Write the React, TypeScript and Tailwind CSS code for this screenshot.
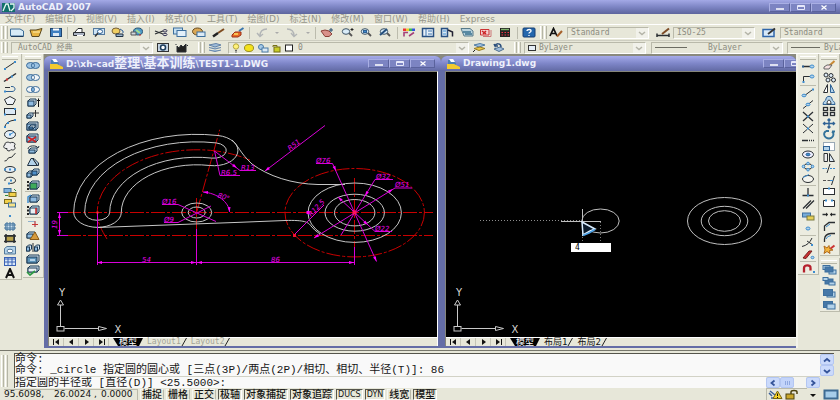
import type { ReactNode } from "react"
import clsx from "clsx"

type Tool = [label: string, icon: ReactNode] | "sep"

const K = "#2b2f33"
const B = "#2f6295"
const L = "#b4d3ea"
const S = "#3c8ccf"

function Dot({ x, y, c = S }: { x: number; y: number; c?: string }) {
  return <rect x={x - 1} y={y - 1} width="2" height="2" fill={c} stroke="none" />
}

function Cube({ x = 3, y = 2, w = 9, h = 7, fill = "#8fbbe0" }: { x?: number; y?: number; w?: number; h?: number; fill?: string }) {
  return (
    <g stroke="#1d3a55">
      <path d={`M${x} ${y + 2}l2 -2h${w - 2}v${h - 2}l-2 2h-${w - 2}z`} fill="#d5e6f3" />
      <rect x={x} y={y + 2} width={w - 2} height={h - 2} fill={fill} />
    </g>
  )
}

function Pad({ x, y, w = 7, h = 4, fill = L, stroke = "#3d6f9d" }: { x: number; y: number; w?: number; h?: number; fill?: string; stroke?: string }) {
  return <rect x={x} y={y} width={w} height={h} fill={fill} stroke={stroke} />
}

function Rings({ a, b, mid }: { a: string; b: string; mid: string }) {
  return (
    <g stroke="#3a6a98">
      <ellipse cx="5.5" cy="5.5" rx="4" ry="3" fill={a} />
      <ellipse cx="10.5" cy="5.5" rx="4" ry="3" fill={b} />
      <path d="M8 3.200C10 4.500 10 6.500 8 7.800C6 6.500 6 4.500 8 3.200z" fill={mid} />
    </g>
  )
}

const drawTools: Tool[] = [
  ["Line", <><path d="M2.500 9L13 2" /><Dot x={3} y={9} /><Dot x={13} y={2} /></>],
  ["Construction line", <><path d="M2 9.500L14 1.500" strokeWidth="1.500" /><Dot x={5} y={7.500} c="#c33" /><Dot x={10} y={4.500} /></>],
  ["Polyline", <><path d="M3 8.500H10C14 8.500 14 3.500 10 3.500H9" stroke={B} /><path d="M3 4.500H8" /><Dot x={3} y={8.500} /></>],
  ["Polygon", <path d="M8 1.500L13.500 4.500L11 9.500H5L2.500 4.500z" fill="#eef3f7" />],
  ["Rectangle", <><rect x="2.500" y="2.500" width="11" height="6" fill="#dbe9f5" /><Dot x={3} y={8.500} /><Dot x={13} y={3} /></>],
  ["Arc", <><path d="M2.500 9.500Q4 3 13 2" /><Dot x={3} y={9} /><Dot x={6} y={5} /><Dot x={13} y={2} /></>],
  ["Circle", <><ellipse cx="8" cy="5.500" rx="5.500" ry="4" fill="#e4eef6" /><path d="M8 5.500L12 3" stroke={S} /><Dot x={8} y={5.500} /></>],
  ["Revision cloud", <path d="M3 4C2 1 7 .5 8 2C11 0 15 3 12 5C15 8 11 10 9 8.500C8 11 4 10 5 7.500C1 8 1 4 3 4z" fill="#eee" />],
  ["Spline", <path d="M2.500 9C6 9.500 5 5 8 5.500S11 2 13.500 1.500" />],
  ["Ellipse", <><ellipse cx="8" cy="5.500" rx="5.500" ry="3" fill="#e4eef6" /><Dot x={3} y={5.500} /><Dot x={13} y={5.500} /><Dot x={8} y={5.500} /></>],
  ["Ellipse arc", <><path d="M3 6C2 1 14 1 13.500 6C13 8.500 9 8.500 7 8.500" /><Dot x={7} y={8.500} /><Dot x={9} y={5.500} /></>],
  ["Insert block", <><Pad x={2} y={1.500} fill="#7fb0da" /><Pad x={7} y={5.500} fill="#f2d14a" stroke="#7a6a20" /><path d="M3 8.500H6M12 2L14 4" stroke="#2d8a3a" /></>],
  ["Make block", <><Pad x={2.500} y={1.500} fill="#f2d14a" stroke="#7a6a20" /><Pad x={6.500} y={5} fill="#f6e388" stroke="#3d6f9d" /></>],
  ["Point", <Dot x={8} y={6} />],
  ["Hatch", <><rect x="3.500" y="2.500" width="9" height="6" fill="#cfe3f3" stroke="#6f93b3" /><path d="M2 4H14M2 7H14M5 1V10M8 1V10M11 1V10" stroke="#49789f" /></>],
  ["Gradient", <><rect x="3.500" y="2.500" width="9" height="6" fill="#b9a34a" /><path d="M2 3H14M2 8.500H14M4 1V10M12 1V10" strokeWidth="1.500" /></>],
  ["Region", <><path d="M2.500 3.500L5 1.500H13.500V9H2.500z" fill={L} stroke="#52789a" /><ellipse cx="8" cy="6" rx="3" ry="1.800" fill="#fff" stroke="#52789a" /></>],
  ["Table", <><rect x="2.500" y="1.500" width="11" height="8" fill="#d8e8f8" stroke="#3a62b5" /><path d="M2.500 3H13.500M2.500 6H13.500M6 2V9M10 2V9" stroke="#3a62b5" /></>],
  ["Multiline text", <path d="M4 10L8 1L12 10M5.500 7H10.500" strokeWidth="2" stroke="#111" />],
]

const solidTools: Tool[] = [
  ["Union", <Rings a="#9cc3e3" b="#9cc3e3" mid="#9cc3e3" />],
  ["Subtract", <Rings a="#9cc3e3" b="#f3f6f8" mid="#f3f6f8" />],
  ["Intersect", <Rings a="#f3f6f8" b="#f3f6f8" mid="#7db0dc" />],
  "sep",
  ["Extrude faces", <><Cube w={8} /><path d="M13.500 10V1.500M12 3.500H15" stroke="#111" /></>],
  ["Move faces", <><Cube x={2} y={4} w={6} h={5} /><path d="M10.500 1V8M8 4H14" stroke="#333" /></>],
  ["Offset faces", <><Cube w={11} x={2} y={1} h={8} /><Cube x={4} y={4} w={6} h={4} fill="#4e8fc9" /></>],
  ["Delete faces", <><Cube x={2} w={11} y={1} h={8} /><path d="M3 4L11 9M11 4L3 9" stroke="#c22" strokeWidth="1.500" /></>],
  ["Rotate faces", <><Cube x={4} y={4} w={8} h={5} /><path d="M3 5C3 1 12 1 13 4L14 2" stroke="#234" /></>],
  ["Taper faces", <><path d="M2.500 9.500L6 2.500H9L13.500 7V9.500z" fill={L} stroke="#234" /><path d="M8 3L12 9" stroke="#111" /></>],
  ["Copy faces", <><Cube x={2} y={3} w={6} h={6} /><Cube x={7} y={1} w={7} h={6} fill="#4e8fc9" /></>],
  ["Color faces", <><Cube x={5} y={1} w={9} h={8} fill="#3faa5a" /><path d="M2 2H4M2 5.500H4M2 9H4" stroke="#222" strokeWidth="2" /></>],
  "sep",
  ["Copy edges", <><Cube x={5} y={2} w={9} h={7} /><path d="M3 10V4L6 2" stroke={S} strokeWidth="1.500" /></>],
  ["Color edges", <><Cube x={5} y={1} w={9} h={8} fill="#e8eef3" /><path d="M11 3V9" stroke="#c22" strokeWidth="1.500" /><path d="M2 2H4M2 5.500H4M2 9H4" stroke="#222" strokeWidth="2" /></>],
  "sep",
  ["Imprint", <><path d="M3 3.500H10V9" stroke="#8eb1cc" /><path d="M7 6.500H13M10 3V9" stroke="#c33" /></>],
  ["Clean", <><Cube x={2} y={2} w={8} h={6} /><path d="M10 2L14 9.500H5z" fill="#d59a3c" stroke="#8a5a17" /></>],
  ["Separate", <><Cube x={1.500} y={3} w={5} h={6} /><Cube x={9.500} y={3} w={5} h={6} /><path d="M8 1V10" /></>],
  ["Shell", <><Cube x={2} y={1} w={12} h={8} fill="#5c93b8" /><rect x="5" y="5" width="5" height="2" fill={L} stroke="none" /></>],
  ["Check", <><Cube x={3} y={1} w={11} h={6} fill="#e8eef3" /><path d="M2 7L5 10L10 6" stroke="#2c9a44" strokeWidth="1.700" /></>],
]

const snapTools: Tool[] = [
  ["Temporary track point", <><path d="M2.500 5.500H10" strokeWidth="1.500" /><Dot x={3} y={5.500} c={B} /><ellipse cx="12" cy="5.500" rx="2" ry="1.500" stroke={S} fill={L} /></>],
  ["Snap from", <><path d="M3.500 10V3.500H10" /><Dot x={3.500} y={9} /><ellipse cx="12" cy="3.500" rx="2" ry="1.500" stroke={S} fill={L} /></>],
  "sep",
  ["Endpoint", <><path d="M4 9L12 3" /><ellipse cx="4" cy="8.500" rx="2" ry="1.300" stroke={S} fill={L} /><Dot x={13} y={2.500} /></>],
  ["Midpoint", <><path d="M3 9.500L13 1.500" /><ellipse cx="8" cy="5.500" rx="2" ry="1.300" stroke={S} fill={L} /></>],
  ["Intersection", <><path d="M3 1L13 10M13 1L3 10" strokeWidth="1.300" /><Dot x={8} y={5.500} /></>],
  ["Apparent intersection", <><path d="M3 1L13 10M13 1L9 4.500M7 6.500L3 10" /><Dot x={8} y={5.500} /></>],
  ["Extension", <path d="M2 5.500H8M9 5.500H10M11 5.500H12M13 5.500H14" strokeWidth="1.300" />],
  "sep",
  ["Center", <><ellipse cx="8" cy="5.500" rx="5.500" ry="3.500" fill="#eef" /><ellipse cx="8" cy="5.500" rx="2" ry="1.300" fill={S} stroke={B} /></>],
  ["Quadrant", <><ellipse cx="8" cy="5.500" rx="4" ry="2.800" /><g fill={L} stroke={S}><circle cx="8" cy="2.500" r="1.300" /><circle cx="8" cy="8.700" r="1.300" /><circle cx="3.500" cy="5.500" r="1.300" /><circle cx="12.500" cy="5.500" r="1.300" /></g></>],
  ["Tangent", <><ellipse cx="8" cy="6" rx="5.500" ry="3.500" fill="#f4f4ee" /><path d="M3 4.500L9 1.500" stroke={S} /></>],
  "sep",
  ["Perpendicular", <><path d="M8 1V8.500M2.500 8.500H13.500" strokeWidth="1.300" /><Dot x={8} y={8.500} /></>],
  ["Parallel", <path d="M3 9.500L11 1.500M6 9.500L14 1.500" strokeWidth="1.300" />],
  ["Insertion", <><Pad x={2.500} y={2} fill="#78acd8" w={8} /><Pad x={7} y={5} fill="#e6cf55" stroke="#7a7a40" /></>],
  ["Node", <ellipse cx="8" cy="5.500" rx="2" ry="1.500" fill={L} stroke={S} />],
  "sep",
  ["Nearest", <><path d="M2 9.500Q9 8 12 1M7 4L13 8" /><Dot x={12} y={8} /></>],
  ["No snap", <><path d="M3 9L9 2H12L6 9.500z" fill="#c33" stroke="#722" /><ellipse cx="12.500" cy="8.500" rx="1.500" ry="1.200" fill={L} stroke={S} /></>],
  "sep",
  ["Snap settings", <><path d="M4 9.500V5C4 1.500 11 1.500 10.500 5V7.500" stroke="#b5202c" strokeWidth="2.300" /><Dot x={14} y={9} /></>],
]

const modifyTools: Tool[] = [
  ["Erase", <><path d="M13.500 1L8 6" stroke="#c98a34" strokeWidth="2" /><path d="M3 7L6 5H11L8 9H3z" fill="#f5e0e0" stroke="#666" /></>],
  ["Copy", <g fill="#dceaf5"><circle cx="5" cy="3" r="2" /><circle cx="10" cy="3.500" r="2" /><circle cx="7" cy="8" r="2" /><circle cx="12.500" cy="8" r="2" /></g>],
  ["Mirror", <><path d="M2.500 9.500L6.500 1.500V9.500z" fill="#fff" /><path d="M13.500 9.500L9.500 1.500V9.500z" fill={L} stroke={B} /></>],
  ["Offset", <><path d="M2 9.500C2 6 5 6 5 4C5 .5 11 .5 11 4C11 6 14 6 14 9.500z" fill={L} stroke={B} /><path d="M6 9C6 7 7 5 8 5S10 7 10 9z" fill="#fff" stroke={K} /></>],
  ["Array", <g fill="#f2f2f2" strokeWidth="1.300"><rect x="2.500" y="1.500" width="4" height="3" /><rect x="9.500" y="1.500" width="4" height="3" /><rect x="2.500" y="6.500" width="4" height="3" /><rect x="9.500" y="6.500" width="4" height="3" /></g>],
  ["Move", <path d="M8 1V10M2.500 5.500H13.500M6.500 2.500L8 1L9.500 2.500M6.500 8.500L8 10L9.500 8.500M4 4L2.500 5.500L4 7M12 4L13.500 5.500L12 7" stroke={B} strokeWidth="1.400" />],
  ["Rotate", <path d="M5 2C1 5 4 9.500 8 9.500S14 5 11 2.500M11 2.500H14M5 2H8" stroke="#34739b" strokeWidth="1.800" />],
  ["Scale", <><rect x="2.500" y="1.500" width="11" height="8" fill="#fff" stroke="#9aa9b5" /><rect x="2.500" y="5.500" width="6" height="4" fill={L} stroke={B} /></>],
  ["Stretch", <><path d="M3 1.500H6.500V9.500H3z" fill="#eee" /><path d="M8.500 1.500L13.500 9.500H8.500z" fill="#dceaf5" /></>],
  ["Trim", <><path d="M9 1L6 10" stroke={K} /><path d="M1.500 5.500H6M9 5.500H14.500" stroke={S} strokeDasharray="2 1" /></>],
  ["Extend", <><path d="M13.500 1L10.500 10" /><path d="M2 5.500H5M6.500 5.500H9" stroke="#555" /><path d="M9 5.500H12" stroke={S} /></>],
  ["Break at point", <><rect x="2.500" y="2.500" width="11" height="6" fill="#fff" /><Dot x={8} y={2.500} /></>],
  ["Break", <><path d="M5 2.500H2.500V8.500H13.500V2.500H11" fill="#fff" /><Dot x={5} y={2.500} /><Dot x={11} y={2.500} /></>],
  ["Join", <><path d="M1.500 5.500H6.500M9.500 5.500H14.500" strokeWidth="1.400" /><path d="M5 3.500L7 5.500L5 7.500zM11 3.500L9 5.500L11 7.500z" fill="#222" stroke="none" /></>],
  ["Chamfer", <><path d="M3.500 10V5L8 1.500H14" strokeWidth="1.300" /><path d="M5 6L9 3" stroke={S} /></>],
  ["Fillet", <><path d="M3.500 10V7Q4 2 10 1.500H14" strokeWidth="1.300" /><path d="M5 7Q6 4 10 3.500" stroke={S} /></>],
  ["Explode", <><path d="M13.500 1.500L9 5" stroke="#c33" strokeWidth="2" /><path d="M3 2L6 4L8 1.500L8.500 4.500L12 6L8.500 6.500L9 9.500L6 7.500L3 9.500L4 6z" fill="#f4b53a" stroke="#b06a1c" /></>],
]

const orderTools: Tool[] = [
  ["Bring to front", <><Pad x={2} y={1.500} /><Pad x={8} y={6} /><Pad x={4} y={3} h={5} w={8} fill="#4678a8" /></>],
  ["Send to back", <><Pad x={4} y={3} h={5} w={8} fill="#4678a8" /><Pad x={2} y={1.500} w={5} h={3} /><Pad x={8} y={6} w={6} h={3} /></>],
  ["Bring above", <><Pad x={6} y={4} w={8} h={5} /><Pad x={2.500} y={1.500} h={6} w={9} fill="#4678a8" /></>],
  ["Send under", <><Pad x={2.500} y={1.500} h={6} w={9} fill="#4678a8" /><Pad x={6} y={4} w={8} h={5} /></>],
]

const lens = <><path d="M10 6L13 9" stroke="#555" strokeWidth="1.800" /><ellipse cx="7" cy="4.500" rx="3.700" ry="2.800" fill="#d9ecf8" stroke="#3b5163" /></>

const standardTools: Tool[] = [
  ["New", <><path d="M1.500 2H11L14.500 4V9H1.500z" fill="#d7ebf7" stroke="#3c6c96" /><path d="M2 9.500H14.500" stroke="#1e3b5c" /></>],
  ["Open", <><path d="M2 3H8L14 1.500L11 9.500H4z" fill="#e8b542" stroke="#5c4a20" /><path d="M5 5H12" stroke="#fff0b0" /></>],
  ["Save", <><rect x="2.500" y="1.500" width="11" height="8" fill="#3f7fc0" stroke="#20456f" /><path d="M5 2.500H11" stroke="#fff" strokeWidth="2" /><rect x="5" y="6" width="6" height="3" fill="#dbe8f4" stroke="none" /></>],
  "sep",
  ["Plot", <><path d="M4 5L7 1.500H11V5" fill="#fff" /><path d="M2.500 5.500H13.500V8.500H2.500z" fill="#aab3c2" /><path d="M6 8.500H12" stroke="#fff" /></>],
  ["Plot preview", <><rect x="2.500" y="1.500" width="11" height="6" fill="#cfe4f4" stroke="#547a9e" /><ellipse cx="9" cy="4.500" rx="2.500" ry="2" fill="#fff" stroke={B} /><path d="M7 6L4 9.500" stroke="#333" strokeWidth="1.500" /></>],
  ["Publish", <><ellipse cx="6" cy="4" rx="4" ry="3" fill="#f0cf62" stroke="#76603a" /><path d="M6 7H13V9.500H6z" fill="#9bb5cc" stroke="#234" /><path d="M10 2L13 4V6" stroke="#2d5f96" /></>],
  ["3DDWF", <><ellipse cx="9" cy="4.500" rx="4.500" ry="3.500" fill="#4f9bc9" stroke="#2c5878" /><path d="M7 3L11 6" stroke="#9fdc8c" strokeWidth="2" /><path d="M2 5H7V8H2z" fill="#cfd6dd" stroke="#555" /><path d="M10 8H12" stroke="#c33" /></>],
  "sep",
  ["Cut", <><path d="M2 4L10 7M2 7L10 4" strokeWidth="1.300" /><ellipse cx="12" cy="3.800" rx="2" ry="1.200" stroke="#335" /><ellipse cx="12" cy="7.500" rx="2" ry="1.200" stroke="#335" /></>],
  ["Copy clip", <><Pad x={1.500} y={1} w={9} h={6} fill="#c4dff2" /><Pad x={5} y={3.500} w={9} h={6} fill="#e3f0f9" /></>],
  ["Paste", <><ellipse cx="6.500" cy="4.500" rx="5" ry="3.500" fill="#d9a755" stroke="#654a20" /><Pad x={6} y={5} w={8} h={4.500} fill="#dcebf6" /></>],
  ["Match properties", <><path d="M13 2L7 6" stroke="#7d4a1e" strokeWidth="2" /><path d="M7 6L2 9.500" stroke="#222" strokeWidth="2.500" /></>],
  ["Block editor", <><path d="M13.500 1L9 4" stroke="#3a76ad" strokeWidth="2" /><path d="M2 8L5 5H11V8L8 10H2z" fill="#e76a28" stroke="#9c2f16" /><path d="M4 7H8" stroke="#ffdf60" strokeWidth="1.500" /></>],
  "sep",
  ["Undo", <path d="M13 2C8 2 6 5 6 9M3 6L6 9.500L9 7" stroke="#b2b5b6" strokeWidth="1.400" />],
  ["Undo list", <path d="M6 5H10L8 7z" fill="#aaa" stroke="none" />],
  ["Redo", <path d="M3 2C8 2 10 5 10 9M7 6L10 9.500L13 7" stroke="#b2b5b6" strokeWidth="1.400" />],
  ["Redo list", <path d="M6 5H10L8 7z" fill="#aaa" stroke="none" />],
  "sep",
  ["Pan", <><path d="M2 4L6 3L10 4L13 7L10 9.500H6z" fill="#d9918a" stroke="#8b4038" /><path d="M12 1V5M10 3H14" stroke="#23486c" /></>],
  ["Zoom realtime", <>{lens}<path d="M13 1V4M11.500 2.500H14.500" stroke="#222" /></>],
  ["Zoom window", <>{lens}<rect x="5.500" y="3.500" width="3" height="2" fill={S} stroke={B} /></>],
  ["Zoom previous", <>{lens}<path d="M3 8L10 2" stroke="#234e7c" strokeWidth="2" /></>],
  "sep",
  ["Properties", <><path d="M2 1.500H5V4H2z" fill="#e33" stroke="none" /><path d="M5 1.500H8V4H5z" fill="#ec3" stroke="none" /><path d="M8 1.500H11V4H8z" fill="#3b5" stroke="none" /><path d="M11 1.500H14V4H11z" fill="#35d" stroke="none" /><path d="M3 9.500V5.500H7M8 9L13 5.500" stroke="#a3427a" strokeWidth="1.600" /></>],
  ["DesignCenter", <><rect x="2.500" y="1.500" width="11" height="8" fill="#e8f1f8" stroke="#285082" strokeWidth="1.500" /><path d="M6 2V9M8 4H12M8 7H12" stroke="#3e76b0" /></>],
  ["Tool palettes", <><rect x="2.500" y="1.500" width="6" height="8" fill="#d9e9f5" stroke="#285082" strokeWidth="1.500" /><path d="M9 3L13.500 5V9.500" stroke="#223" strokeWidth="1.500" /><path d="M4 4H7M4 7H7" stroke={S} /></>],
  ["Sheet set manager", <><path d="M2 1.500H11L14 4V9H5z" fill="#b9d3de" stroke="#587a8a" /><path d="M4 5H12M6 7H13" stroke="#39728e" strokeWidth="1.400" /></>],
  ["Markup set manager", <><path d="M2.500 2.500H11V8H2.500z" fill="#f3d0d0" stroke="#c33" /><path d="M4 4L8 7M8 4L5 7" stroke="#c22" strokeWidth="1.500" /><path d="M13 3V9.500H5" stroke="#c77" /></>],
  ["QuickCalc", <><rect x="3" y="1" width="10" height="9" fill="#222" stroke="none" /><path d="M4 2.500H12" stroke="#7fb06b" strokeWidth="1.400" /><path d="M4.500 5.500H12M4.500 8H12" stroke="#e34" strokeDasharray="1.500 1.500" /></>],
  "sep",
  ["Help", <><rect x="2" y="1" width="12" height="9" rx="1" fill="#2467ad" stroke="#163f73" /><path d="M6 4C6 2 10.500 2 10 4C10 5.500 8 5 8 6.500M8 8V9" stroke="#fff" strokeWidth="1.300" /></>],
]

const menus = [
  "文件(F)",
  "编辑(E)",
  "视图(V)",
  "插入(I)",
  "格式(O)",
  "工具(T)",
  "绘图(D)",
  "标注(N)",
  "修改(M)",
  "窗口(W)",
  "帮助(H)",
  "Express",
]

const statusToggles: [string, boolean][] = [
  ["捕捉", false],
  ["栅格", false],
  ["正交", false],
  ["极轴", true],
  ["对象捕捉", true],
  ["对象追踪", true],
  ["DUCS", true],
  ["DYN", true],
  ["线宽", false],
  ["模型", true],
]

function Icon({ children, className }: { children: ReactNode; className?: string }) {
  return (
    <svg viewBox="0 0 16 11" fill="none" stroke={K} className={clsx("h-[11px] w-4 shrink-0", className)} aria-hidden="true">
      {children}
    </svg>
  )
}

function Grip({ vertical }: { vertical?: boolean }) {
  if (vertical) {
    return <div className="h-1 w-4 shrink-0 self-center border-y border-t-white border-b-[#b5b5a6]" />
  }
  return (
    <div className="flex w-[9px] shrink-0 justify-center gap-px self-stretch py-px">
      <div className="w-[3px] border-r border-l border-r-[#b5b5a6] border-l-white" />
      <div className="w-[3px] border-r border-l border-r-[#b5b5a6] border-l-white" />
    </div>
  )
}

function Palette({ tools, className }: { tools: Tool[]; className?: string }) {
  return (
    <div className="flex w-full flex-col border-r border-b border-[#bcbcad] bg-[#ecece0] pt-[2px]">
      <Grip vertical />
      <div className={clsx("flex flex-col items-center justify-around", className)}>
        {tools.map((tool, i) =>
          tool === "sep" ? (
            <div key={i} className="h-px w-4 bg-[#bcbcad]" />
          ) : (
            <button key={i} type="button" aria-label={tool[0]} className="block">
              <Icon>{tool[1]}</Icon>
            </button>
          )
        )}
      </div>
    </div>
  )
}

function Combo({ label, value, icon, className }: { label: string; value: string; icon?: ReactNode; className?: string }) {
  return (
    <div className={clsx("flex h-3 shrink-0 items-center border border-[#b9b9aa] border-r-white border-b-white pl-[3px]", className)}>
      {icon}
      <select
        aria-label={label}
        className="h-[10px] min-w-0 flex-1 appearance-none bg-transparent font-['DejaVu_Sans_Mono','Noto_Sans_CJK_SC',monospace] text-[8px] leading-[10px] text-[#8b8b80] outline-none"
      >
        <option>{value}</option>
      </select>
      <svg viewBox="0 0 12 10" fill="none" className="h-[10px] w-3 shrink-0 bg-[#f1f1ea]" aria-hidden="true">
        <path d="M3 4L6 6.500L9 4" stroke="#b4b4a8" strokeWidth="1.500" />
      </svg>
    </div>
  )
}

function WindowButtons() {
  const shell =
    "flex h-[9px] items-center justify-center border border-[#a9afe4] border-r-[#5a629c] border-b-[#5a629c] bg-[#7c84c2]"
  return (
    <div className="flex shrink-0">
      <button type="button" aria-label="Minimize" className={clsx(shell, "w-[21px]")}>
        <svg viewBox="0 0 10 7" className="h-[7px] w-[10px]" stroke="#fff" strokeWidth="1.500"><path d="M1 5H9" /></svg>
      </button>
      <button type="button" aria-label="Restore" className={clsx(shell, "w-[21px]")}>
        <svg viewBox="0 0 10 7" className="h-[7px] w-[10px]" stroke="#e6e8fa" fill="none"><path d="M1.500 1.500H8.500V5.500H1.500zM1.500 2.500H8" /></svg>
      </button>
      <button type="button" aria-label="Close" className={clsx(shell, "w-[25px]")}>
        <svg viewBox="0 0 10 7" className="h-[7px] w-[10px]" stroke="#fff" strokeWidth="1.300"><path d="M2.500 1.500L7.500 5.500M7.500 1.500L2.500 5.500" /></svg>
      </button>
    </div>
  )
}

function DwgIcon() {
  return (
    <svg viewBox="0 0 13 10" className="h-[10px] w-[13px] shrink-0" aria-hidden="true">
      <path d="M1 1H5L9 4V8H1z" fill="#4c7fb4" />
      <path d="M2 0H6L8 3H4z" fill="#fff" />
      <path d="M0 5L7 5L13 8V10H0z" fill="#f3ca2e" />
    </svg>
  )
}

function NavButtons() {
  const shapes: [string, string][] = [
    ["First tab", "M3 1H4V7H3zM9 1V7L5 4z"],
    ["Previous tab", "M8 1V7L4 4z"],
    ["Next tab", "M5 1V7L9 4z"],
    ["Last tab", "M4 1V7L8 4zM9 1H10V7H9z"],
  ]
  return (
    <div className="flex shrink-0">
      {shapes.map(([label, d]) => (
        <button key={label} type="button" aria-label={label} className="flex w-[15px] justify-center border-r border-[#c4c4b6]">
          <svg viewBox="0 0 13 8" className="h-2 w-[13px]" fill="#111"><path d={d} /></svg>
        </button>
      ))}
    </div>
  )
}

function DrawingWindow({
  title,
  tabs,
  muted,
  clipped,
  className,
  children,
}: {
  title: ReactNode
  tabs: string[]
  muted?: boolean
  clipped?: boolean
  className?: string
  children: ReactNode
}) {
  return (
    <section className={clsx("flex min-w-0 flex-col overflow-hidden rounded-t-md bg-[#646da6]", className)}>
      <header
        className={clsx(
          "flex h-[15px] shrink-0 items-center justify-between bg-linear-to-b from-[#a6abea] via-[#7e86c8] to-[#626aa4] pl-[6px]",
          clipped ? "-mr-[37px] pr-[3px]" : "pr-[6px]"
        )}
      >
        <div className="flex items-center gap-[3px]">
          <DwgIcon />
          <h2 className="font-['DejaVu_Sans','Noto_Sans_CJK_SC',sans-serif] text-[9px] leading-[13px] font-bold whitespace-nowrap text-[#eef0fb]">
            {title}
          </h2>
        </div>
        <WindowButtons />
      </header>
      <div className={clsx("ml-1 flex flex-1 flex-col border-t border-l border-[#85857a]", !clipped && "mr-[3px] border-r border-r-white")}>
        <div className="relative flex-1 overflow-hidden bg-black">{children}</div>
        <div className="flex h-[9px] shrink-0 border-t border-white bg-[#e7e7d9] font-['DejaVu_Sans_Mono','Noto_Sans_CJK_SC',monospace] text-[8px] leading-[8px]">
          <NavButtons />
          <div className="ml-1 flex">
            <button
              type="button"
              className="bg-black px-[6px] text-[9px] text-white [clip-path:polygon(0_0,100%_0,calc(100%-4px)_100%,5px_100%)]"
            >
              模型
            </button>
            {tabs.map((tab) => (
              <button
                key={tab}
                type="button"
                className={clsx("flex items-center pl-[4px]", muted ? "text-[#a3a396]" : "text-[9px] text-[#111]")}
              >
                {tab}
                <svg viewBox="0 0 6 8" className="h-2 w-[6px]" stroke="#222"><path d="M5.500 0L1 8" /></svg>
              </button>
            ))}
          </div>
        </div>
      </div>
      <div className="h-[2px] shrink-0" />
    </section>
  )
}

function Ucs({ x }: { x: number }) {
  return (
    <g stroke="#c9c9c9" fill="none">
      <rect x={x - 3.5} y="326.500" width="7" height="4.500" />
      <path d={`M${x} 326V305M${x - 3} 305L${x} 300L${x + 3} 305zM${x + 4} 328.500H${x + 38}M${x + 38} 326.500L${x + 46} 328.500L${x + 38} 330.500z`} />
      <g stroke="none" fill="#d6d6d6" fontFamily="DejaVu Sans, sans-serif" fontSize="10">
        <text x={x - 1.5} y="296">Y</text>
        <text x={x + 54} y="333">X</text>
      </g>
    </g>
  )
}

function Arrow({ x, y, a }: { x: number; y: number; a: number }) {
  return <path d="M0 0L-5 -1.500V1.500z" fill="#f0f" stroke="none" transform={`translate(${x} ${y}) rotate(${a})`} />
}

function PartDrawing() {
  return (
    <svg viewBox="49 72 388 265" preserveAspectRatio="xMinYMin meet" fill="none" className="block h-[265px] w-full">
      <g stroke="#c80000" strokeDasharray="14 2 3 2">
        <path d="M67 212.500H433M67 235.500H433" />
        <path d="M107 239C101 229 97 222 97.300 212.300A99.500 62.500 0 0 1 214 150.700Q233 153 250 160" />
        <path d="M196.700 212.300L219.700 129.700M196.500 198V230" />
        <path d="M354.500 178V248" />
        <ellipse cx="354.700" cy="212.700" rx="69.700" ry="44.200" />
      </g>
      <g stroke="#c6c6c6">
        <path d="M73.700 212.300A123 78 0 0 1 218 135.500A23.700 15 0 0 1 209.800 165.500A75.500 47.500 0 0 0 121.300 212.300A23.700 15 0 0 1 73.700 212.300" />
        <path d="M84.700 212.300A112 70.500 0 0 1 216.100 142.900A12 7.500 0 0 1 211.800 158.100A87 55 0 0 0 109.700 212.300A12.500 8 0 0 1 84.700 212.300" />
        <path d="M232 140C238 145 240 153 252 164C268 176 292 184 318 184.500H345" />
        <path d="M98 227.500L240 222.300L285 220.500C305 220 308 222 311 226Q314 230 320 234" />
        <ellipse cx="196.700" cy="212.500" rx="15" ry="9.500" />
        <ellipse cx="196.700" cy="212.500" rx="8.500" ry="5.500" />
        <ellipse cx="354.700" cy="212.700" rx="46.700" ry="29.700" />
        <ellipse cx="354.700" cy="212.700" rx="29.700" ry="18.500" />
        <ellipse cx="354.700" cy="212.700" rx="20.200" ry="13.200" />
      </g>
      <g stroke="#d800d8">
        <path d="M97.500 213V265M196.500 229V265M354.500 247V265M97 262.500H354" />
        <path d="M59.500 213V235M57 212.500H68M57 235.500H68" />
        <path d="M325 125.500L265 171" />
        <path d="M316 163.500H332.500L376.500 261.500" />
        <path d="M393 179.500H375L341 235" />
        <path d="M412 188H395L314 238" />
        <path d="M392 231.500H375L338 197" />
        <path d="M294 235L324 205" />
        <path d="M162 204.500H178L216 221.500M164 222.500H178L211 206" />
        <path d="M240 175.500H220L214.500 151L240 170.500H256" />
        <path d="M203 192C217 193 229 202 229.500 212" />
      </g>
      <Arrow x={97} y={262.5} a={180} />
      <Arrow x={196} y={262.5} a={0} />
      <Arrow x={197} y={262.5} a={180} />
      <Arrow x={354} y={262.5} a={0} />
      <Arrow x={59.5} y={213} a={-90} />
      <Arrow x={59.5} y={235} a={90} />
      <Arrow x={265} y={171} a={143} />
      <Arrow x={336} y={171} a={66} />
      <Arrow x={376.5} y={261.5} a={66} />
      <Arrow x={365} y={196} a={121} />
      <Arrow x={393} y={189} a={-32} />
      <Arrow x={314} y={238} a={148} />
      <Arrow x={338} y={197} a={-137} />
      <Arrow x={368} y={225} a={43} />
      <Arrow x={203} y={192} a={185} />
      <Arrow x={229.5} y={212} a={85} />
      <Arrow x={237} y={168} a={37} />
      <Dot x={97.5} y={212.5} c="#f33" />
      <rect x="352.500" y="210.500" width="4" height="4" fill="#ff1060" />
      <rect x="306.500" y="211" width="3" height="3" fill="#f0f" />
      <rect x="293" y="234" width="3" height="3" fill="#f01030" />
      <g fill="#f000f0" fontFamily="DejaVu Sans, sans-serif" fontStyle="italic" fontSize="7">
        <text x="142" y="262">54</text>
        <text x="271" y="262">86</text>
        <text x="162" y="204">Ø16</text>
        <text x="164" y="222">Ø9</text>
        <text x="221" y="175">R6.5</text>
        <text x="241" y="170">R13</text>
        <text x="316" y="163">Ø76</text>
        <text x="376" y="179">Ø32</text>
        <text x="395" y="187">Ø51</text>
        <text x="375" y="231">Ø22</text>
        <text transform="translate(57 229) rotate(-90)">19</text>
        <text transform="translate(290 151) rotate(-38)">R51</text>
        <text transform="translate(311 217) rotate(-46)">R12.5</text>
        <text transform="translate(217 197) rotate(20)">80°</text>
      </g>
      <Ucs x={60.5} />
    </svg>
  )
}

function SketchDrawing() {
  return (
    <svg viewBox="446 72 350 265" preserveAspectRatio="xMinYMin slice" fill="none" className="block h-[265px] w-full">
      <g stroke="#bfbfbf">
        <ellipse cx="724.500" cy="221" rx="37" ry="23.500" />
        <ellipse cx="724.500" cy="221" rx="23.300" ry="14.700" />
        <ellipse cx="724.500" cy="221" rx="16" ry="10.300" />
        <ellipse cx="600.500" cy="221" rx="18.700" ry="12" />
        <path d="M561 221.500H601M582.500 209V236" />
        <path d="M480 220.500H582" stroke="#8d8d8d" strokeDasharray="1 2" />
        <path d="M600.500 222V242M582.500 234V242" stroke="#777" strokeDasharray="1 2" />
      </g>
      <path d="M582 222L595 229L590 231L583 235z" fill="#0b1b2c" stroke="#d9edff" strokeWidth="1.500" />
      <path d="M595 229.500L589 233L583 235.500" stroke="#4aa0e6" strokeWidth="1.500" />
      <Ucs x={457.5} />
    </svg>
  )
}

function ScrollButton({ label, d }: { label: string; d: string }) {
  return (
    <button type="button" aria-label={label} className="h-[11px] w-[14px] shrink-0 rounded-[2px] border border-[#b3c6f2] bg-[#cbdafb]">
      <svg viewBox="0 0 12 8" className="h-2 w-3" fill="none" stroke="#35549a" strokeWidth="1.800"><path d={d} /></svg>
    </button>
  )
}

function CommandLine() {
  return (
    <div className="flex border-t border-[#77776c] bg-[#e7e7d9] pt-[2px] pr-[6px] font-['Liberation_Mono','Noto_Sans_CJK_SC',monospace] text-[11px] text-[#151515]">
      <div className="mt-px flex w-[14px] shrink-0">
        <Grip />
      </div>
      <div className="min-w-0 flex-1 border-t border-l border-[#55554c]">
        <div className="flex">
          <div className="min-w-0 flex-1 bg-[#f9f9f9] leading-[11px] whitespace-pre">
            <p>命令:</p>
            <p>命令: _circle 指定圆的圆心或 [三点(3P)/两点(2P)/相切、相切、半径(T)]: 86</p>
          </div>
          <div className="flex flex-col">
            <ScrollButton label="Scroll up" d="M3 5.500L6 3L9 5.500" />
            <ScrollButton label="Scroll down" d="M3 3L6 5.500L9 3" />
          </div>
        </div>
        <div className="mr-[14px] flex h-3 border-t border-[#d2d2c6]">
          <input
            aria-label="Command"
            readOnly
            value="指定圆的半径或 [直径(D)] <25.5000>:"
            className="h-[11px] min-w-0 flex-1 bg-[#f9f9f9] pb-[3px] leading-[11px] outline-none"
          />
          <ScrollButton label="Scroll left" d="M7.500 1.500L4.500 4L7.500 6.500" />
          <div className="flex h-[11px] w-[26px] bg-[#f4f4f0]">
            <div className="flex w-[14px] items-center justify-center gap-px rounded-[2px] border border-[#b3c6f2] bg-[#c3d4fa]">
              <i className="h-1 w-px bg-[#8fa8e0]" />
              <i className="h-1 w-px bg-[#8fa8e0]" />
              <i className="h-1 w-px bg-[#8fa8e0]" />
            </div>
          </div>
          <ScrollButton label="Scroll right" d="M4.500 1.500L7.500 4L4.500 6.500" />
        </div>
      </div>
    </div>
  )
}

function StatusBar() {
  return (
    <footer className="flex h-[13px] shrink-0 items-center border-b border-[#a4aec6] bg-[#e7e7d9] pl-1 font-['DejaVu_Sans','Noto_Sans_CJK_SC',sans-serif] text-[9px] leading-[11px] text-[#151515]">
      <div className="flex h-[11px] w-[134px] shrink-0 items-center border-t border-r border-[#b9b9aa] whitespace-nowrap">
        <span className="w-[50px]">95.6098,</span>
        <span className="w-[47px]">26.0024 ,</span>
        <span>0.0000</span>
      </div>
      <div className="flex gap-[2px] pl-[2px]">
        {statusToggles.map(([label, on]) => (
          <button
            key={label}
            type="button"
            aria-pressed={on}
            className={clsx(
              "h-[11px] border px-px leading-[10px] font-medium whitespace-nowrap",
              /^[A-Z]/.test(label) ? "text-[8px]" : "text-[10px]",
              on ? "border-[#55554c] border-r-white border-b-white" : "border-[#f7f7f0] border-r-[#b9b9aa]"
            )}
          >
            {label}
          </button>
        ))}
      </div>
      <div className="ml-auto flex items-center pr-px">
        <div className="flex border-t border-l border-[#b9b9aa]">
          <Icon>
            <path d="M3 2L8 6M2 4L5 7M4 9H8" stroke="#3a5f9a" strokeWidth="1.500" />
            <path d="M10.500 2L15 9.500H6z" fill="#f5d327" stroke="#7a6510" />
            <path d="M10.500 4.500V7M10.500 8V9" stroke="#111" />
          </Icon>
          <Icon className="mr-2">
            <path d="M8 5V3C8 1 14 1 14 3V5" stroke="#4c4210" strokeWidth="1.500" />
            <rect x="3" y="5" width="8" height="5" fill="#c9a62a" stroke="#4c4210" />
          </Icon>
        </div>
        <button type="button" aria-label="Tray menu">
          <svg viewBox="0 0 12 8" className="h-2 w-3" fill="#111"><path d="M3 4H9L6 7z" /></svg>
        </button>
        <button type="button" aria-label="Clean screen" className="ml-1">
          <Icon>
            <rect x="1.500" y="1.500" width="13" height="8" fill="#a6cdea" stroke="#3d6b93" strokeWidth="2" />
          </Icon>
        </button>
      </div>
    </footer>
  )
}

export default function App() {
  return (
    <div className="flex min-h-screen flex-col overflow-hidden bg-[#e7e7d9] font-['DejaVu_Sans','Noto_Sans_CJK_SC',sans-serif]">
      <header className="flex h-[14px] shrink-0 items-center justify-between bg-linear-to-b from-[#a3a9e6] via-[#7d85c4] to-[#5d659d] pr-1 pl-[2px]">
        <div className="flex items-center gap-[3px]">
          <svg viewBox="0 0 13 9" className="h-[9px] w-[13px]" aria-hidden="true">
            <rect width="13" height="9" fill="#11706a" />
            <path d="M1 8L4 1H6L8 8M8 1H12V5L9 8" stroke="#e6f7f4" strokeWidth="1.300" fill="none" />
          </svg>
          <h1 className="text-[9px] leading-[12px] font-bold text-[#eef0fb]">AutoCAD 2007</h1>
        </div>
        <WindowButtons />
      </header>

      <nav className="flex h-[10px] shrink-0 items-center gap-[10px] pl-[5px] text-[9px] leading-[10px] text-[#96968a]">
        {menus.map((m) => (
          <button key={m} type="button" className="whitespace-nowrap">
            {m}
          </button>
        ))}
      </nav>

      <div className="flex h-4 shrink-0 items-center overflow-hidden border-t border-white">
        <Grip />
        <div className="flex w-[528px] shrink-0 items-center justify-between">
          {standardTools.map((tool, i) =>
            tool === "sep" ? (
              <div key={i} className="h-3 w-px bg-[#bcbcad]" />
            ) : (
              <button key={i} type="button" aria-label={tool[0]} className={clsx("flex justify-center", tool[0].endsWith("list") ? "w-2" : "w-4")}>
                <Icon>{tool[1]}</Icon>
              </button>
            )
          )}
        </div>
        <div className="ml-[2px] h-3 w-px bg-[#bcbcad]" />
        <Grip />
        <Icon className="mr-[3px]">
          <path d="M2 9L5.500 1.500L9 9M3.500 6.500H8" stroke="#111" strokeWidth="1.700" />
          <path d="M14 4L9 9.500" stroke="#a6602b" strokeWidth="2" />
        </Icon>
        <Combo label="Text style" value="Standard" className="w-[82px]" />
        <div className="mx-[3px] h-3 w-px bg-[#bcbcad]" />
        <Icon className="mr-[2px]">
          <path d="M2 8.500H14M2 6.500V10M14 6.500V10" strokeWidth="1.500" />
          <path d="M14 1.500L7 7" stroke="#7c4b26" strokeWidth="2" />
        </Icon>
        <Combo label="Dimension style" value="ISO-25" className="w-[82px]" />
        <div className="mx-[3px] h-3 w-px bg-[#bcbcad]" />
        <Icon className="mr-[3px]">
          <rect x="2" y="2.500" width="11" height="7" fill="#d7e9f8" stroke="#2f66ab" strokeWidth="1.500" />
          <path d="M14 1.500L7 7" stroke="#333" strokeWidth="1.800" />
        </Icon>
        <Combo label="Table style" value="Standard" className="min-w-[82px] flex-1" />
      </div>

      <div className="flex h-[14px] shrink-0 items-center overflow-hidden border-t border-[#cdcdc0]">
        <Grip />
        <Combo label="Workspace" value="AutoCAD 经典" className="ml-[2px] w-[142px] pl-[6px]" />
        <Icon className="ml-[2px]">
          <rect x="2.500" y="1.500" width="11" height="8" fill="#c5d5e4" stroke="#333" />
          <circle cx="8" cy="5.500" r="2.500" fill="#fff" stroke="#1d3d5c" strokeWidth="1.500" />
        </Icon>
        <Icon className="mr-[7px] ml-[3px]">
          <path d="M3 10V4L5 6L7 3L9 5L12 2V10z" fill="#222" />
          <path d="M2 2V3M13.500 3V4" />
        </Icon>
        <div className="h-3 w-px bg-[#bcbcad]" />
        <Grip />
        <Icon className="mr-[5px] ml-px">
          <path d="M2 3L9 1.500L14 3L8 5zM2 5.500L8 7L14 5.500M2 8L8 9.500L14 8" fill="#9fbddb" stroke="#6584a8" />
        </Icon>
        <Combo
          label="Layer"
          value="0"
          className="w-[241px] pl-[2px]"
          icon={
            <svg viewBox="0 0 64 10" className="mr-[2px] h-[10px] w-16 shrink-0" fill="none" aria-hidden="true">
              <circle cx="4" cy="3.500" r="2.700" fill="#fff27a" stroke="#b3a43c" />
              <path d="M3 7.500H5M3 9H5" stroke="#666" />
              <ellipse cx="17" cy="5" rx="4.500" ry="3.500" fill="#f4e21c" stroke="#9a8e1e" />
              <circle cx="29" cy="4" r="2.500" fill="#a8cbe8" stroke="#4a7ba6" />
              <rect x="30" y="5" width="6" height="4" fill="#d9e8f4" stroke="#4a7ba6" />
              <path d="M41 4V2.500H45V4" stroke="#777116" />
              <rect x="42" y="4" width="6" height="5" fill="#c8cc28" stroke="#777116" />
              <rect x="53.500" y="2" width="7" height="6" fill="#fff" stroke="#222" />
            </svg>
          }
        />
        <Icon className="ml-[2px]">
          <path d="M3 3L9 1.500L14 3L8 5z" fill="#9fc0df" stroke="#4f7ca5" />
          <path d="M3 6.500L9 5L14 6.500L8 8.500z" fill="#ecc94a" stroke="#9a7d22" />
          <path d="M2 10L4 8" stroke="#222" />
        </Icon>
        <Icon className="mr-[5px] ml-[3px]">
          <path d="M4 7L10 5L14 7L9 9.500z" fill="#9fbddb" stroke="#4f6f91" />
          <path d="M11 5C11 1 6 1 5 4L4 2M5 4L8 4" stroke="#2b4f7c" strokeWidth="1.500" />
        </Icon>
        <div className="mx-px h-3 w-px bg-[#bcbcad]" />
        <Grip />
        <Combo
          label="Color"
          value="ByLayer"
          className="ml-[2px] w-[122px]"
          icon={<span className="mr-[3px] h-[6px] w-2 border border-[#333] bg-[#e6eef6]" />}
        />
        <Combo
          label="Linetype"
          value="ByLayer"
          className="ml-[5px] w-[132px]"
          icon={<span className="mr-[21px] h-px w-8 bg-[#6c6c62]" />}
        />
        <Combo
          label="Lineweight"
          value="ByLayer"
          className="ml-[4px] min-w-[90px] flex-1"
          icon={<span className="mr-[4px] h-px w-[29px] shrink-0 bg-[#6c6c62]" />}
        />
      </div>

      <main className="flex flex-1">
        <aside className="flex w-[44px] shrink-0 items-start gap-px">
          <Palette tools={drawTools} className="h-[219px]" />
          <Palette tools={solidTools} className="h-[217px]" />
        </aside>
        <div className="flex min-w-0 flex-1 border-t-2 border-[#8a8a7e] bg-[#8a8a7e]">
          <DrawingWindow
            className="flex-[397]"
            muted
            tabs={["Layout1", "Layout2"]}
            title={
              <>
                D:\xh-cad<span className="text-[13px]">整理</span>\<span className="text-[13px]">基本训练</span>\TEST1-1.DWG
              </>
            }
          >
            <PartDrawing />
          </DrawingWindow>
          <DrawingWindow className="flex-[355]" clipped tabs={["布局1", "布局2"]} title="Drawing1.dwg">
            <SketchDrawing />
            <input
              aria-label="Radius"
              defaultValue="4"
              className="absolute top-[171px] left-[125px] h-[9px] w-10 bg-white pl-1 font-['DejaVu_Sans_Mono',monospace] text-[8px] leading-[9px] text-black outline-none"
            />
          </DrawingWindow>
        </div>
        <aside className="flex w-[44px] shrink-0 items-start gap-px border-l-2 border-[#f3f3ea]">
          <Palette tools={snapTools} className="h-[214px]" />
          <div className="flex w-full flex-col gap-[2px]">
            <Palette tools={modifyTools} className="h-[195px]" />
            <Palette tools={orderTools} className="h-[47px]" />
          </div>
        </aside>
      </main>

      <div className="mt-[2px]">
        <CommandLine />
      </div>
      <StatusBar />
    </div>
  )
}
